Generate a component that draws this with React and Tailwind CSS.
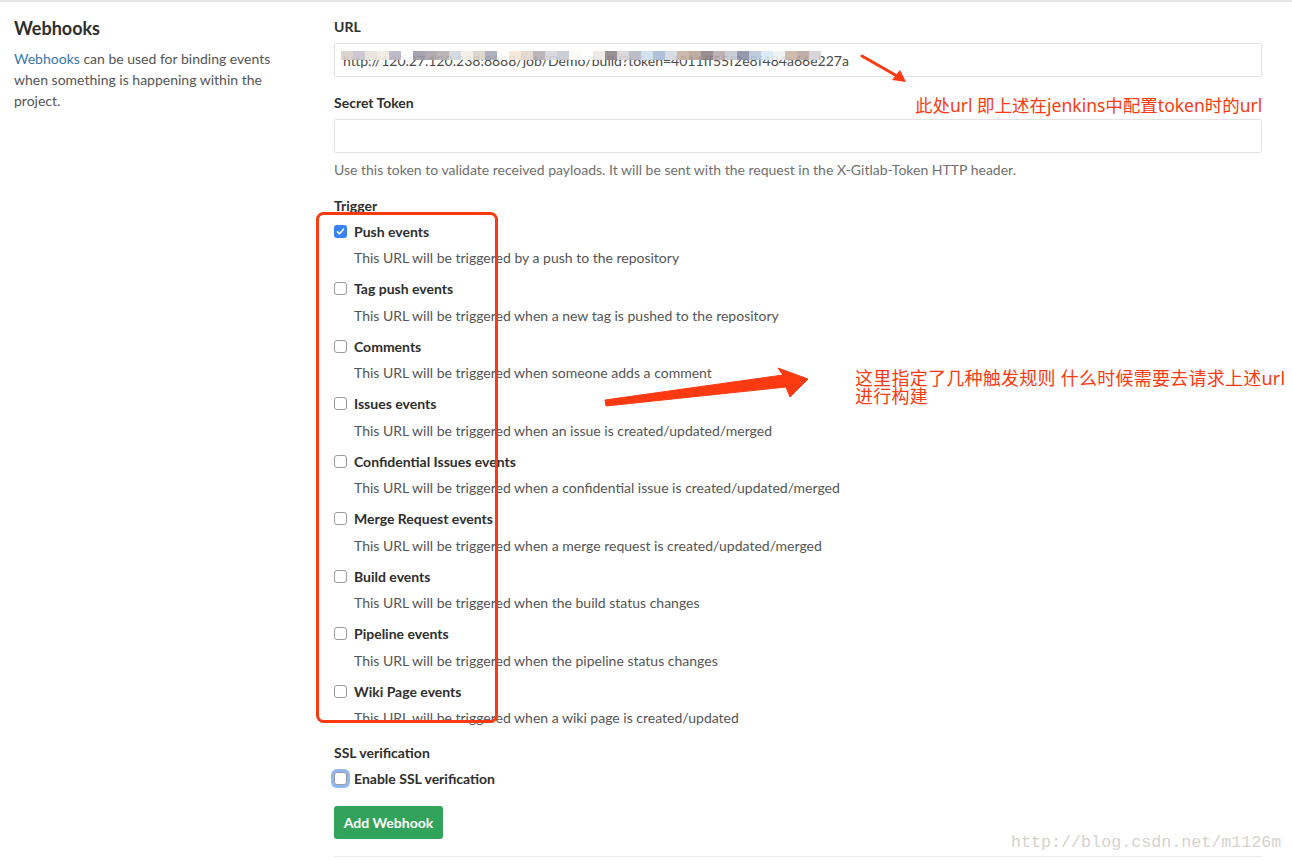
import React from 'react';

const triggers = [
    ['Push events', 'This URL will be triggered by a push to the repository', true],
    ['Tag push events', 'This URL will be triggered when a new tag is pushed to the repository'],
    ['Comments', 'This URL will be triggered when someone adds a comment'],
    ['Issues events', 'This URL will be triggered when an issue is created/updated/merged'],
    ['Confidential Issues events', 'This URL will be triggered when a confidential issue is created/updated/merged'],
    ['Merge Request events', 'This URL will be triggered when a merge request is created/updated/merged'],
    ['Build events', 'This URL will be triggered when the build status changes'],
    ['Pipeline events', 'This URL will be triggered when the pipeline status changes'],
    ['Wiki Page events', 'This URL will be triggered when a wiki page is created/updated'],
];

// pixelated blur over the URL
const mosaic = [
    '#d9cfc9', '#c8c4cf', '#e8e2dc', '#f3ece4', '#b9b6c4', '#ffffff', '#9e9aa8', '#a9a3a9', '#b8adb0', '#cfd7e2',
    '#f4efe8', '#dad2c9', '#a8a9b8', '#ffffff', '#f6e7d6', '#e2d8cc', '#b3aeb2', '#d7d5da', '#c6c9d2', '#fbfbf8',
    '#ffffff', '#ece9e4', '#8d8488', '#d8d4d8', '#b5b7c4', '#cfdff0', '#a8bcd6', '#d2d8e2', '#c7b2a2', '#b9a296',
    '#8f8286', '#b7aaab', '#c6c9d3', '#8b8fa4', '#b7c7db', '#d9ebf7', '#eef0f2', '#c9b4a4', '#b7a69e', '#d5d2d8',
];

function Checkbox({ checked, focus }) {
    if (checked) {
        return (
            <span className="w-[13px] h-[13px] rounded-[3px] bg-[#3a82f6] flex items-center justify-center shrink-0">
                <svg width="9" height="9" viewBox="0 0 9 9">
                    <path d="M1.5 4.8 L3.6 6.8 L7.5 2.2" fill="none" stroke="white" strokeWidth="1.6" strokeLinecap="round" strokeLinejoin="round" />
                </svg>
            </span>
        );
    }
    return (
        <span className={`w-[13px] h-[13px] rounded-[3px] bg-white border border-[#9a9a9a] shrink-0 ${focus ? 'shadow-[0_0_0_3px_#8fb8f3]' : ''}`} />
    );
}

export default function App() {
    return (
        <div className="relative w-[1292px] h-[860px] bg-white border-t-2 border-[#e6e6e6] overflow-hidden text-[14px] text-[#555]" style={{ fontFamily: 'Lato, "Noto Sans", sans-serif' }}>
            <div className="flex">
                <div className="w-[320px] pl-[14px] pr-[28px] pt-[14px]">
                    <h4 className="text-[18px] font-bold text-[#2e2e2e] leading-[24px]">Webhooks</h4>
                    <p className="mt-[8px] leading-[21px] text-[#555]">
                        <span className="text-[#3777b0]">Webhooks</span> can be used for binding events when something is happening within the project.
                    </p>
                </div>
                <div className="w-[928px] ml-[14px] pt-[15px]">
                    <label className="block font-bold text-[#2e2e2e] leading-[20px]">URL</label>
                    <div className="relative mt-[6px] h-[34px] border border-[#e3e3e3] rounded-[2px] px-[8px] flex items-center text-[#4a4a4a] overflow-hidden">
                        <span>http://120.27.120.238:8888/job/Demo/build?token=4011ff55f2e8f484a66e227a</span>
                        <div className="absolute left-[6px] top-[7px] flex flex-wrap w-[480px] opacity-90">
                            {mosaic.map((c, i) => (
                                <span key={i} className="w-[12px] h-[9px]" style={{ backgroundColor: c }} />
                            ))}
                        </div>
                    </div>

                    <label className="block mt-[16px] font-bold text-[#2e2e2e] leading-[20px]">Secret Token</label>
                    <div className="mt-[6px] h-[34px] border border-[#e3e3e3] rounded-[2px]" />
                    <p className="mt-[7px] leading-[20px] text-[#707070]">
                        Use this token to validate received payloads. It will be sent with the request in the X-Gitlab-Token HTTP header.
                    </p>

                    <label className="block mt-[16px] font-bold text-[#2e2e2e] leading-[20px]">Trigger</label>
                    <div className="mt-[5px] flex flex-col">
                        {triggers.map(([title, desc, checked]) => (
                            <div key={title} className="h-[57.5px]">
                                <div className="flex items-center gap-[7px] h-[20px]">
                                    <Checkbox checked={checked} />
                                    <span className="font-bold text-[#2e2e2e]">{title}</span>
                                </div>
                                <p className="mt-[7px] ml-[20px] leading-[20px]">{desc}</p>
                            </div>
                        ))}
                    </div>

                    <label className="block mt-[4px] font-bold text-[#2e2e2e] leading-[20px]">SSL verification</label>
                    <div className="mt-[6px] flex items-center gap-[7px] h-[20px]">
                        <Checkbox focus />
                        <span className="font-bold text-[#2e2e2e]">Enable SSL verification</span>
                    </div>
                    <button className="mt-[17px] h-[33px] w-[109px] rounded-[3px] bg-[#31a35b] text-white font-bold text-[14px]">
                        Add Webhook
                    </button>
                    <div className="mt-[17px] border-t border-[#ececec]" />
                </div>
            </div>

            {/* annotations */}
            <svg className="absolute left-0 top-0 pointer-events-none" width="1292" height="860" viewBox="0 0 1292 860">
                <rect x="317.5" y="211.5" width="179" height="508" rx="6" fill="none" stroke="#fc3a12" strokeWidth="3" />
                <line x1="862" y1="54" x2="897" y2="74" stroke="#fc3a12" strokeWidth="3" strokeLinecap="round" />
                <polygon points="906,80 892,78 900,68" fill="#fc3a12" />
                <polygon points="605,398 783,373 778,366 808,377 790,395 786,385 606,404" fill="#fc3a12" strokeLinejoin="round" stroke="#fc3a12" strokeWidth="1" />
            </svg>
            <div className="absolute left-[915px] top-[93px] text-[17.5px] leading-[20px] text-[#fc3a12] whitespace-nowrap" style={{ fontFamily: '"Noto Sans", "Noto Sans CJK SC", sans-serif' }}>
                此处url 即上述在jenkins中配置token时的url
            </div>
            <div className="absolute left-[855px] top-[367px] text-[18px] leading-[18px] tracking-[0.25px] text-[#fc3a12] whitespace-nowrap" style={{ fontFamily: '"Noto Sans", "Noto Sans CJK SC", sans-serif' }}>
                这里指定了几种触发规则 什么时候需要去请求上述url<br />进行构建
            </div>
            <div className="absolute left-[1011px] top-[830px] text-[16.7px] leading-[22px] text-[#d6d3cf] whitespace-nowrap" style={{ fontFamily: '"Liberation Mono", monospace' }}>
                http://blog.csdn.net/m1126m
            </div>
        </div>
    );
}
